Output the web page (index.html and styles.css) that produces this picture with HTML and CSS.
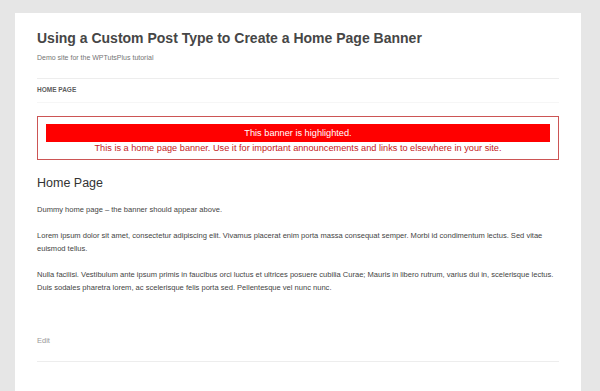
FILE: index.html
```html
<!DOCTYPE html>
<html lang="en">
<head>
    <meta charset="UTF-8">
    <meta name="viewport" content="width=device-width, initial-scale=1.0">
    <title>Using a Custom Post Type to Create a Home Page Banner</title>
    <link rel="stylesheet" href="styles.css">
</head>
<body>
    <div class="site">
        <header class="site-header">
            <h1 class="site-title">Using a Custom Post Type to Create a Home Page Banner</h1>
            <p class="site-description">Demo site for the WPTutsPlus tutorial</p>
        </header>

        <nav class="main-nav">
            <a href="#">Home Page</a>
        </nav>

        <div class="banner">
            <p class="banner-highlight">This banner is highlighted.</p>
            <p class="banner-text">This is a home page banner. Use it for important announcements and links to elsewhere in your site.</p>
        </div>

        <article class="entry">
            <h2 class="entry-title">Home Page</h2>
            <div class="entry-content">
                <p>Dummy home page &ndash; the banner should appear above.</p>
                <p>Lorem ipsum dolor sit amet, consectetur adipiscing elit. Vivamus placerat enim porta massa consequat semper. Morbi id condimentum lectus. Sed vitae euismod tellus.</p>
                <p>Nulla facilisi. Vestibulum ante ipsum primis in faucibus orci luctus et ultrices posuere cubilia Curae; Mauris in libero rutrum, varius dui in, scelerisque lectus. Duis sodales pharetra lorem, ac scelerisque felis porta sed. Pellentesque vel nunc nunc.</p>
            </div>
            <footer class="entry-meta">
                <a href="#">Edit</a>
            </footer>
        </article>
    </div>
</body>
</html>
```

FILE: styles.css
```css
* {
    margin: 0;
    padding: 0;
    box-sizing: border-box;
}

html,
body {
    height: 100%;
    overflow: hidden;
}

body {
    background: #e6e6e6;
    font-family: "Liberation Sans", Arial, sans-serif;
    color: #444;
    padding: 13px 19px 0 15px;
}

.site {
    background: #fff;
    padding: 0 22px 30px;
    min-height: 100%;
}

.site-header {
    padding: 15px 0;
    border-bottom: 1px solid #ededed;
}

.site-title {
    font-size: 14px;
    font-weight: bold;
    line-height: 20px;
    color: #464646;
}

.site-description {
    font-size: 7px;
    line-height: 10px;
    color: #757575;
    margin-top: 5px;
}

.main-nav {
    padding: 6px 0 7px;
    border-bottom: 1px solid #f6f6f6;
}

.main-nav a {
    display: block;
    font-size: 6.5px;
    line-height: 10px;
    font-weight: bold;
    text-transform: uppercase;
    color: #5e5e5e;
    text-decoration: none;
}

.banner {
    margin-top: 13px;
    border: 1px solid #cc5555;
    padding: 7px 8px 5px;
    text-align: center;
    font-size: 9.2px;
}

.banner-highlight {
    background: #ff0000;
    color: #fff;
    line-height: 18px;
}

.banner-text {
    color: #c41a1a;
    line-height: 12px;
}

.entry-title {
    font-size: 12.5px;
    font-weight: normal;
    color: #333;
    margin-top: 15px;
    line-height: 16px;
}

.entry-content {
    margin-top: 12px;
    font-size: 7.55px;
    line-height: 13px;
    color: #444;
}

.entry-content p {
    margin-bottom: 13px;
}

.entry-meta {
    margin-top: 42px;
    padding-bottom: 15px;
    border-bottom: 1px solid #ededed;
}

.entry-meta a {
    display: block;
    font-size: 7.5px;
    line-height: 10px;
    color: #999;
    text-decoration: none;
}
```
